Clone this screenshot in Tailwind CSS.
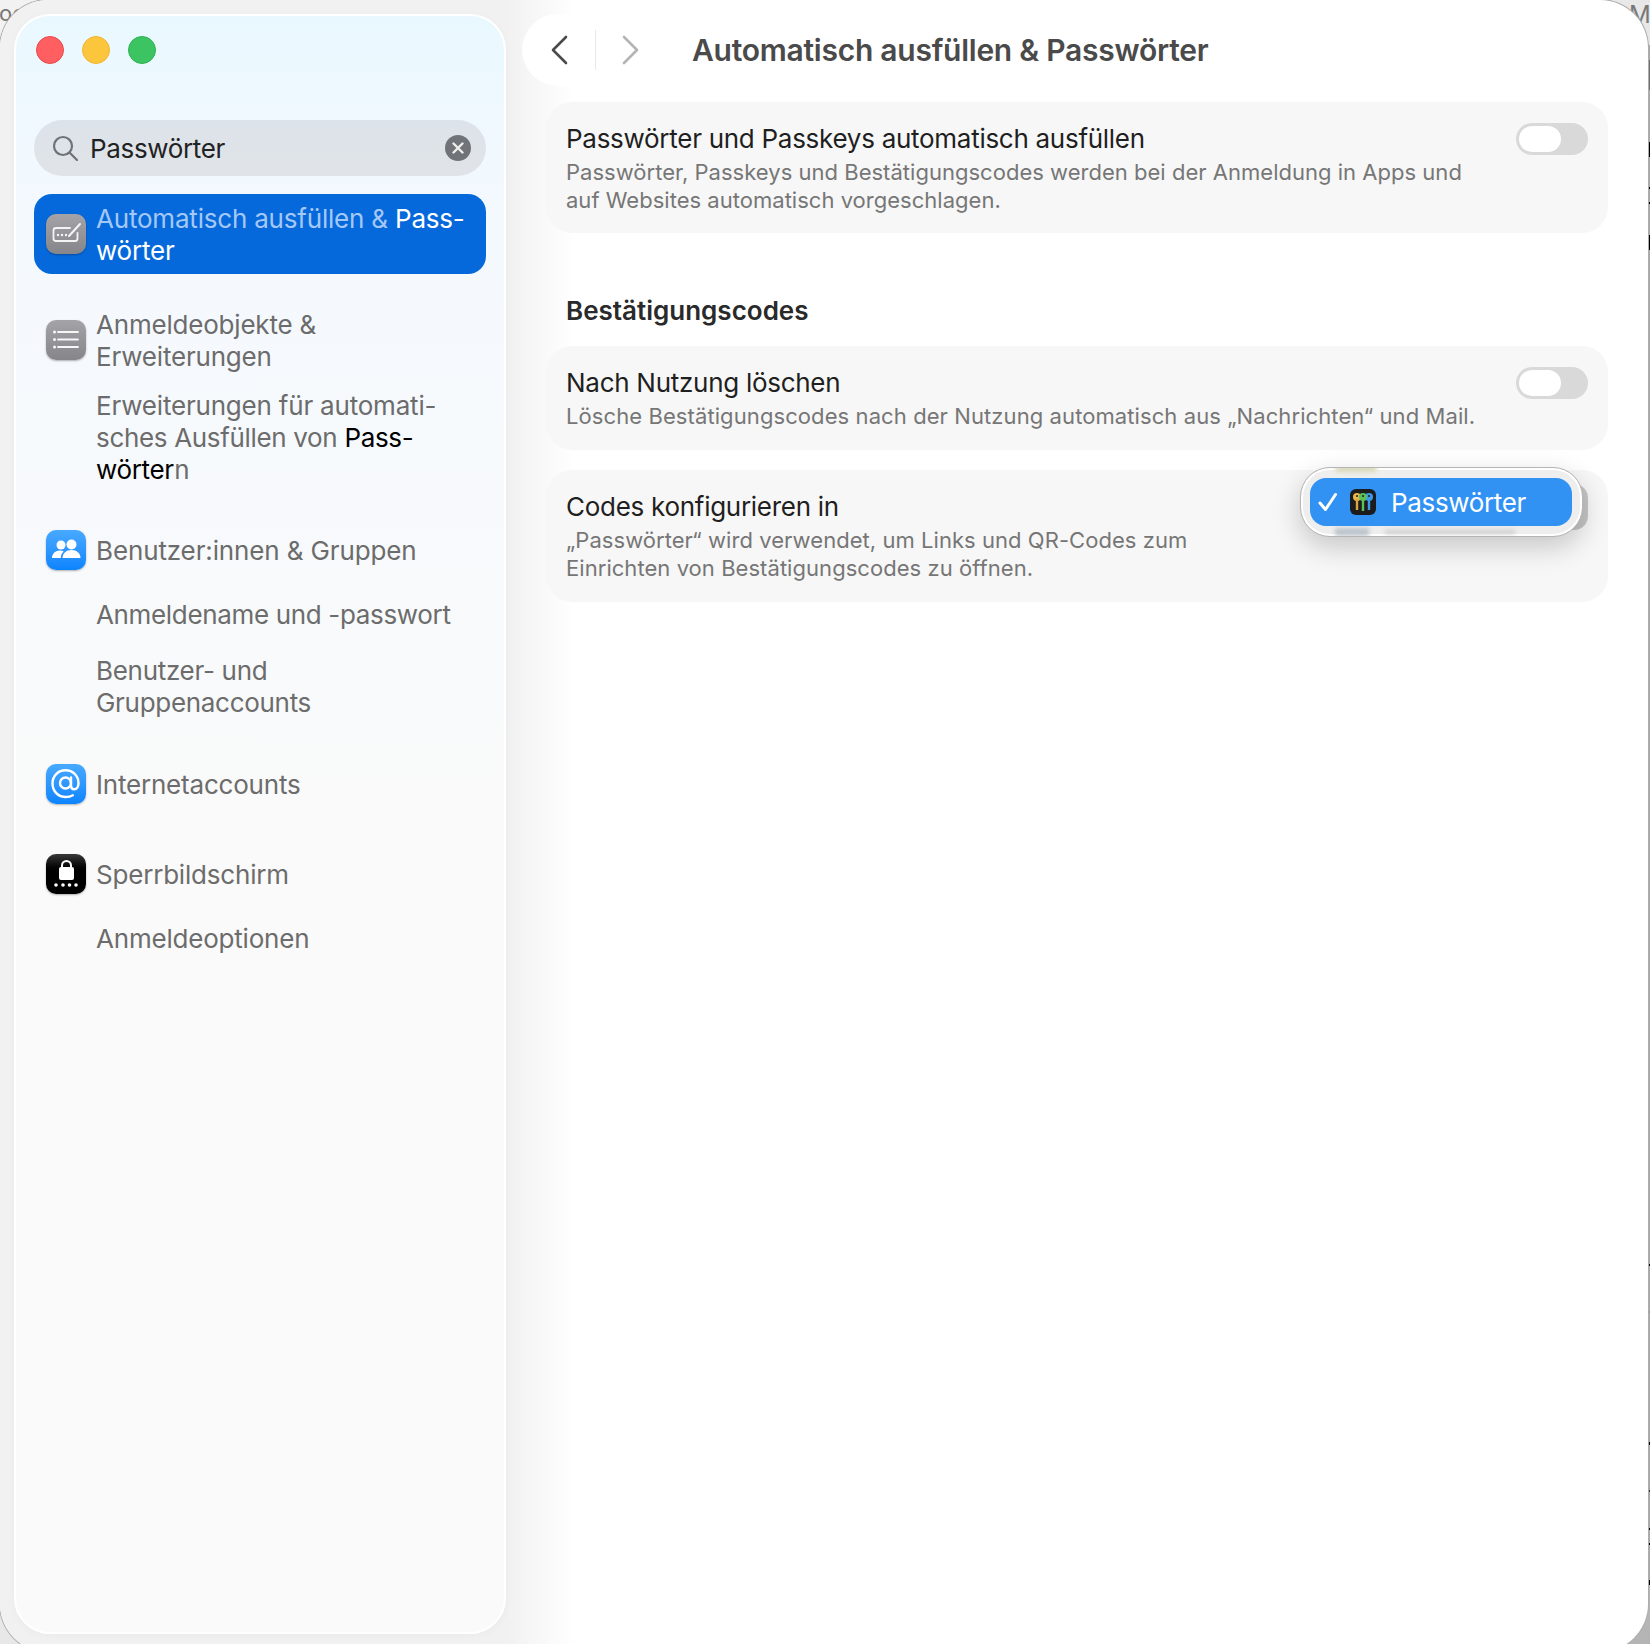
<!DOCTYPE html>
<html lang="de">
  <head>
    <meta charset="UTF-8" />
    <meta name="viewport" content="width=device-width, initial-scale=1.0" />
    <title>Automatisch ausfüllen &amp; Passwörter</title>
    <script src="https://cdn.jsdelivr.net/npm/@tailwindcss/browser@4"></script>
  </head>
  <body class="bg-[#c4c4c4] font-['Inter',sans-serif] antialiased">
    <div class="relative h-[1644px] w-[1650px] overflow-hidden bg-linear-to-br from-[#f2f2f2] from-40% to-[#b4b4b4] to-100%">
      <!-- desktop text behind the window corners -->
      <span class="absolute top-[2px] left-[-1px] text-[22px] leading-none text-[#777]">oc</span>
      <span class="absolute top-[3px] left-[1629px] text-[24px] leading-none text-[#777]">M</span>

      <!-- desktop showing through at the right edge -->
      <div class="absolute top-[45px] left-[1648px] h-[1540px] w-[2px] bg-[#a8a8a8]">
        <span class="absolute top-[15px] left-0 h-[30px] w-[2px] bg-[#707070]"></span>
        <span class="absolute top-[97px] left-0 h-[15px] w-[2px] bg-black"></span>
        <span class="absolute top-[142px] left-0 h-[2px] w-[2px] bg-black"></span>
        <span class="absolute top-[157px] left-0 h-[2px] w-[2px] bg-black"></span>
        <span class="absolute top-[190px] left-0 h-[15px] w-[2px] bg-black"></span>
        <span class="absolute top-[1219px] left-0 h-[2px] w-[2px] bg-black"></span>
        <span class="absolute top-[1266px] left-0 h-[2px] w-[2px] bg-[#8a8ac8]"></span>
        <span class="absolute top-[1397px] left-0 h-[3px] w-[2px] bg-black"></span>
        <span class="absolute top-[1445px] left-0 h-[2px] w-[2px] bg-[#333]"></span>
        <span class="absolute top-[1483px] left-0 h-[2px] w-[2px] bg-black"></span>
        <span class="absolute top-[1498px] left-0 h-[2px] w-[2px] bg-black"></span>
        <span class="absolute top-[1535px] left-0 h-[5px] w-[2px] bg-black"></span>
      </div>

      <!-- window -->
      <div class="relative flex h-[1652px] w-[1648px] overflow-hidden rounded-[48px] bg-white shadow-[0_0_0_1px_#adadad]">
        <!-- sidebar column -->
        <div class="h-full w-[575px] shrink-0 bg-linear-to-r from-[#f1f1f1] from-88% to-white pt-[14px] pl-[14px]">
          <aside class="h-[1620px] w-[492px] rounded-[36px] border-2 border-white bg-linear-to-b from-[#e9f8ff] via-[#f4f9fe] via-12% to-[#fafafa] to-50% px-[18px] shadow-[0_2px_10px_rgba(0,0,0,0.03)]">
            <!-- traffic lights -->
            <div class="flex gap-[18px] pt-[20px] pl-[2px]">
              <span class="size-[28px] rounded-full border border-[#e9484a] bg-[#ff5f60]"></span>
              <span class="size-[28px] rounded-full border border-[#f0b52e] bg-[#fbc63c]"></span>
              <span class="size-[28px] rounded-full border border-[#2bb350] bg-[#3cc463]"></span>
            </div>

            <!-- search -->
            <div class="mt-[56px] flex h-[56px] items-center rounded-full bg-linear-to-b from-[#dde3ea] to-[#e0e4e8] pr-[15px] pl-[18px]">
              <svg class="size-[26px] shrink-0" viewBox="0 0 26 26" fill="none" stroke="#6f7276" stroke-width="2.2" stroke-linecap="round">
                <circle cx="11" cy="11" r="9" />
                <path d="M18 18l7 7" />
              </svg>
              <span class="mt-[2px] ml-[12px] flex-1 text-[26px] leading-none tracking-[-0.35px] text-[#222]">Passwörter</span>
              <span class="flex size-[26px] items-center justify-center rounded-full bg-[#707478]">
                <svg class="size-[12px]" viewBox="0 0 12 12" fill="none" stroke="#eee" stroke-width="2.4" stroke-linecap="round"><path d="M1.5 1.5l9 9M10.5 1.5l-9 9" /></svg>
              </span>
            </div>

            <!-- results -->
            <nav class="text-[26px] leading-[32px] tracking-[-0.2px] text-[#6c6c6c]">
              <div class="mt-[18px] flex h-[80px] items-center gap-[10px] rounded-[18px] bg-[#0669db] pl-[12px]">
                <span class="flex size-[40px] shrink-0 items-center justify-center rounded-[10px] bg-linear-to-b from-[#a4a4a8] to-[#86868a] shadow-[0_1px_2px_rgba(0,0,0,0.3)]">
                  <svg class="size-[36px]" viewBox="0 0 36 36" fill="none" stroke="#f4f4f4" stroke-width="1.8" stroke-linecap="round">
                    <path d="M22 12H8a2.5 2.5 0 0 0-2.500 2.500v8A2.500 2.500 0 0 0 8 25h19a2.500 2.500 0 0 0 2.500-2.500V17" />
                    <path d="M21 20l11-12" stroke-width="2" />
                    <path d="M10 19h.01M14 19h.01M18 19h.01" stroke-width="2.400" />
                  </svg>
                </span>
                <div class="mt-[2px] text-[#a4c8f5]">Automatisch ausfüllen &amp; <span class="text-white">Pass-<br />wörter</span></div>
              </div>

              <div class="mt-[35px] flex items-center gap-[10px] pl-[12px]">
                <span class="mt-[-2px] flex size-[40px] shrink-0 items-center justify-center rounded-[10px] bg-linear-to-b from-[#a4a4a8] to-[#86868a] shadow-[0_1px_2px_rgba(0,0,0,0.3)]">
                  <svg class="size-[30px]" viewBox="0 0 30 30" fill="none" stroke="#f6f6f6" stroke-width="1.800" stroke-linecap="round">
                    <path d="M7 7h20M7 14.500h20M7 22h20" />
                    <path d="M3.500 7h.01M3.500 14.500h.01M3.500 22h.01" stroke-width="3" />
                  </svg>
                </span>
                <div>Anmeldeobjekte &amp;<br />Erweiterungen</div>
              </div>
              <div class="mt-[17px] pl-[62px]">Erweiterungen für automati-<br /><span class="tracking-[-0.33px]">sches Ausfüllen von <span class="text-black">Pass-<br />wörter</span>n</span></div>

              <div class="mt-[46px] flex items-center gap-[10px] pl-[12px]">
                <span class="mt-[-2px] flex size-[40px] shrink-0 items-center justify-center rounded-[10px] bg-linear-to-b from-[#47a9ff] to-[#0a84ff] shadow-[0_1px_2px_rgba(0,0,0,0.3)]">
                  <svg class="size-[34px]" viewBox="0 0 34 34" fill="#fff">
                    <circle cx="12" cy="12" r="4.500" />
                    <circle cx="22.500" cy="11.500" r="5" />
                    <path d="M3 25c0-4.500 3.500-7.500 8-7.500 1.500 0 2.800.3 3.800 1-2 1.600-3 3.800-3 6.500z" />
                    <path d="M13.500 25c0-5 4-8 9-8s9 3 9 8z" />
                  </svg>
                </span>
                <div class="tracking-[-0.13px]">Benutzer:innen &amp; Gruppen</div>
              </div>
              <div class="mt-[29px] pl-[62px] tracking-[-0.34px]">Anmeldename und -passwort</div>
              <div class="mt-[24px] pl-[62px] tracking-[-0.3px]">Benutzer- und<br />Gruppenaccounts</div>

              <div class="mt-[47px] flex items-center gap-[10px] pl-[12px]">
                <span class="mt-[-2px] flex size-[40px] shrink-0 items-center justify-center rounded-[10px] bg-linear-to-b from-[#47a9ff] to-[#0a84ff] shadow-[0_1px_2px_rgba(0,0,0,0.3)]">
                  <svg class="size-[34px]" viewBox="0 0 34 34" fill="none" stroke="#fff" stroke-width="2.400" stroke-linecap="round">
                    <circle cx="16.500" cy="16" r="5.500" />
                    <path d="M22 10.500v8c0 2.500 1.300 3.800 3.200 3.800 2.600 0 4.300-2.500 4.300-6 0-7.500-5.500-13-13-13S3.500 9 3.500 16.500 9 30 17 30c2.600 0 4.700-.5 6.800-1.700" />
                  </svg>
                </span>
                <div>Internetaccounts</div>
              </div>

              <div class="mt-[52px] flex items-center gap-[10px] pl-[12px]">
                <span class="mt-[-2px] flex size-[40px] shrink-0 items-center justify-center rounded-[10px] bg-linear-to-b from-[#3a3a3a] to-black to-50% shadow-[0_1px_2px_rgba(0,0,0,0.3)]">
                  <svg class="size-[34px]" viewBox="0 0 34 34" fill="#fff">
                    <rect x="10" y="10" width="15" height="13" rx="2" />
                    <path d="M13 11V8.500a4.500 4.500 0 0 1 9 0V11" fill="none" stroke="#fff" stroke-width="2" />
                    <circle cx="7" cy="28" r="1.800" /><circle cx="14" cy="28" r="1.800" /><circle cx="20.500" cy="28" r="1.800" /><circle cx="27" cy="28" r="1.800" />
                  </svg>
                </span>
                <div>Sperrbildschirm</div>
              </div>
              <div class="mt-[29px] pl-[62px]">Anmeldeoptionen</div>
            </nav>
          </aside>
        </div>

        <!-- main column -->
        <main class="relative ml-[-55px] flex-1 pr-[40px] pl-[26px]">
          <header class="flex h-[102px] items-start">
            <div class="mt-[14px] ml-[-24px] flex h-[72px] w-[146px] items-center justify-between rounded-[36px] bg-white px-[26px]">
              <svg class="h-[32px] w-[22px]" viewBox="0 0 22 32" fill="none" stroke="#4a4a4a" stroke-width="2.600" stroke-linecap="round" stroke-linejoin="round"><path d="M18 3L5 16l13 13" /></svg>
              <span class="h-[40px] w-px bg-[#e8e8e8]"></span>
              <svg class="h-[32px] w-[22px]" viewBox="0 0 22 32" fill="none" stroke="#b4b4b4" stroke-width="2.600" stroke-linecap="round" stroke-linejoin="round"><path d="M4 3l13 13L4 29" /></svg>
            </div>
            <h1 class="mt-[32px] ml-[24px] text-[30px] leading-[36px] font-semibold tracking-[-0.25px] text-[#4a4a4a]">Automatisch ausfüllen &amp; Passwörter</h1>
          </header>

          <section class="rounded-[26px] bg-[#f7f7f7] pt-[21px] pr-[20px] pb-[19px] pl-[20px]">
            <div class="flex items-start justify-between">
              <div class="text-[26px] leading-[32px] tracking-[-0.28px] text-[#1f1f1f]">Passwörter und Passkeys automatisch ausfüllen</div>
              <div class="flex h-[32px] w-[72px] items-center rounded-full bg-[#d9d9d9] pl-[3px]"><span class="h-[26px] w-[42px] rounded-full bg-white"></span></div>
            </div>
            <p class="mt-[3px] text-[22px] leading-[28px] tracking-[0.02px] text-[#767676]">Passwörter, Passkeys und Bestätigungscodes werden bei der Anmeldung in Apps und<br />auf Websites automatisch vorgeschlagen.</p>
          </section>

          <h2 class="mt-[62px] pl-[20px] text-[26px] leading-[32px] font-semibold text-[#2a2a2a]">Bestätigungscodes</h2>

          <section class="mt-[19px] rounded-[26px] bg-[#f7f7f7] pt-[21px] pr-[20px] pb-[20px] pl-[20px]">
            <div class="flex items-start justify-between">
              <div class="text-[26px] leading-[32px] tracking-[-0.28px] text-[#1f1f1f]">Nach Nutzung löschen</div>
              <div class="flex h-[32px] w-[72px] items-center rounded-full bg-[#d9d9d9] pl-[3px]"><span class="h-[26px] w-[42px] rounded-full bg-white"></span></div>
            </div>
            <p class="mt-[3px] text-[22px] leading-[28px] tracking-[0.09px] text-[#767676]">Lösche Bestätigungscodes nach der Nutzung automatisch aus „Nachrichten“ und Mail.</p>
          </section>

          <section class="relative mt-[20px] rounded-[26px] bg-[#f7f7f7] pt-[21px] pr-[20px] pb-[20px] pl-[20px]">
            <div class="text-[26px] leading-[32px] tracking-[-0.28px] text-[#1f1f1f]">Codes konfigurieren in</div>
            <p class="mt-[3px] text-[22px] leading-[28px] tracking-[0.05px] text-[#767676]">„Passwörter“ wird verwendet, um Links und QR-Codes zum<br />Einrichten von Bestätigungscodes zu öffnen.</p>

            <!-- popup menu over the card -->
            <div class="absolute top-[14px] right-[20px] h-[46px] w-[60px] rounded-r-[14px] bg-[#c6c6c6]"></div>
            <div class="absolute top-[-3px] right-[25px] h-[70px] w-[283px] overflow-hidden rounded-[30px] border border-[#b5b5b5] bg-[#eeeeee] shadow-[0_10px_28px_rgba(0,0,0,0.2),inset_0_0_0_2px_#ffffff]">
              <!-- menu items blurred behind the glass -->
              <span class="absolute top-[-3px] left-[34px] h-[7px] w-[42px] rounded-full bg-[#d8d8b8] blur-[2px]"></span>
              <span class="absolute bottom-[0px] left-[34px] h-[8px] w-[34px] bg-[#bcc4cc] blur-[2px]"></span>
              <span class="absolute bottom-[2px] left-[84px] h-[4px] w-[130px] bg-[#cccccc] blur-[2px]"></span>
              <div class="absolute top-[10px] left-[9px] flex h-[48px] w-[262px] items-center rounded-[16px] bg-[#3192f3] text-white">
                <svg class="ml-[8px] size-[20px]" viewBox="0 0 20 20" fill="none" stroke="#fff" stroke-width="3" stroke-linecap="round" stroke-linejoin="round"><path d="M2 11l5.500 6.500L17.500 2.500" /></svg>
                <span class="ml-[12px] flex size-[26px] items-center justify-center rounded-[6px] bg-[#1c1c1c]">
                  <svg class="size-[22px]" viewBox="0 0 22 22">
                    <circle cx="5" cy="6" r="4" fill="#e9b84a" /><path d="M3.800 8h2.400v11H3.800z" fill="#d9a73c" />
                    <circle cx="17" cy="6" r="4" fill="#3d97ea" /><path d="M15.800 8h2.400v11h-2.400z" fill="#3d97ea" />
                    <circle cx="11" cy="6" r="4" fill="#5cc05a" /><path d="M9.800 8h2.400v12H9.800z" fill="#5cc05a" />
                    <circle cx="5" cy="5" r="1" fill="#1c1c1c" /><circle cx="11" cy="5" r="1" fill="#1c1c1c" /><circle cx="17" cy="5" r="1" fill="#1c1c1c" />
                  </svg>
                </span>
                <span class="mt-[2px] ml-[15px] text-[26px] leading-none tracking-[-0.35px]">Passwörter</span>
              </div>
            </div>
          </section>
        </main>
      </div>
    </div>
  </body>
</html>
